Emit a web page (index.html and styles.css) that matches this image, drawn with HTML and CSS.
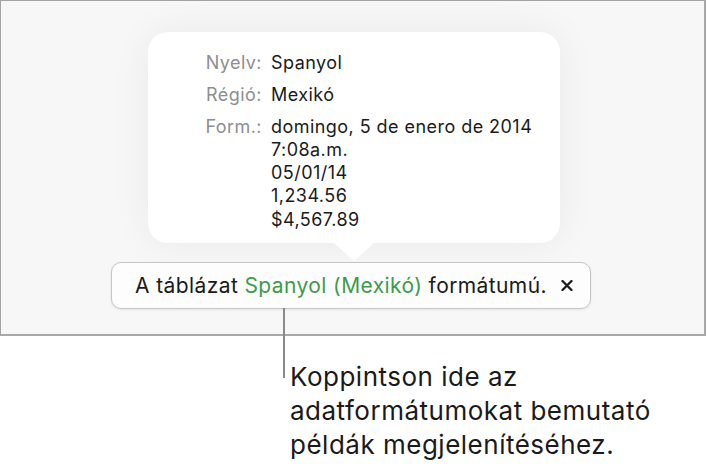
FILE: index.html
```html
<!DOCTYPE html>
<html lang="hu">
<head>
<meta charset="utf-8">
<title>Formátum</title>
<link rel="stylesheet" href="styles.css">
</head>
<body>
<div class="frame">
  <div class="popover">
    <div class="grid">
      <div class="label">Nyelv:</div>
      <div class="value">Spanyol</div>
      <div class="label">Régió:</div>
      <div class="value">Mexikó</div>
      <div class="label">Form.:</div>
      <div class="value">domingo, 5 de enero de 2014<br>7:08a.m.<br>05/01/14<br>1,234.56<br>$4,567.89</div>
    </div>
  </div>
  <div class="pill">
    <span class="pill-text">A táblázat <span class="green">Spanyol (Mexikó)</span> formátumú.</span>
    <svg class="close" width="12" height="11" viewBox="0 0 12 11"><path d="M1.5 1 L10.5 10 M10.5 1 L1.5 10" stroke="#1c1c1c" stroke-width="2.3" stroke-linecap="round"/></svg>
  </div>
</div>
<p class="callout">Koppintson ide az<br>adatformátumokat bemutató<br>példák megjelenítéséhez.</p>
</body>
</html>
```
FILE: styles.css
```css
html, body {
  margin: 0;
  padding: 0;
  background: #ffffff;
}
body {
  font-family: Inter, Roboto, "Liberation Sans", sans-serif;
  color: #1a1a1a;
  width: 708px;
  height: 473px;
  overflow: hidden;
}
.frame {
  box-sizing: border-box;
  width: 706px;
  height: 336px;
  border-left: 1px solid #a3a3a3;
  border-top: 1px solid #a3a3a3;
  border-right: 2px solid #a8a8a8;
  border-bottom: 2px solid #a8a8a8;
  background: #f7f7f7;
  display: flex;
  flex-direction: column;
  align-items: flex-start;
  padding-top: 31px;
}
.popover {
  position: relative;
  margin-left: 147px;
  width: 412px;
  box-sizing: border-box;
  background: #ffffff;
  border-radius: 20px;
  padding: 19px 0 12px 0;
  box-shadow: 0 0 40px rgba(0, 0, 0, 0.06);
}
.popover::after {
  content: "";
  position: absolute;
  left: 186px;
  bottom: -18px;
  width: 0;
  height: 0;
  border-left: 20px solid transparent;
  border-right: 20px solid transparent;
  border-top: 18px solid #ffffff;
}
.grid {
  display: grid;
  grid-template-columns: 114px auto;
  column-gap: 9px;
  row-gap: 8.5px;
  font-size: 18px;
  line-height: 23.3px;
  letter-spacing: 0.45px;
}
.label {
  color: #8e8e8e;
  text-align: right;
}
.value {
  color: #1a1a1a;
}
.pill {
  position: relative;
  margin-top: 19px;
  margin-left: 110px;
  box-sizing: border-box;
  width: 480px;
  height: 47px;
  background: #fdfdfd;
  border: 1px solid #c6c6c6;
  border-radius: 10px;
  box-shadow: 0 1px 3px rgba(0, 0, 0, 0.08);
  display: flex;
  align-items: center;
  padding-left: 23px;
  font-size: 21px;
  letter-spacing: 0.4px;
  color: #1a1a1a;
}
.pill::after {
  content: "";
  position: absolute;
  left: 171px;
  top: 100%;
  width: 2px;
  height: 70px;
  background: #8a8a8a;
}
.green {
  color: #3d9b4a;
}
.close {
  margin-left: 14px;
}
.callout {
  margin: 24px 0 0 290px;
  font-size: 26px;
  line-height: 34px;
  letter-spacing: 0.5px;
  color: #1a1a1a;
}
```
